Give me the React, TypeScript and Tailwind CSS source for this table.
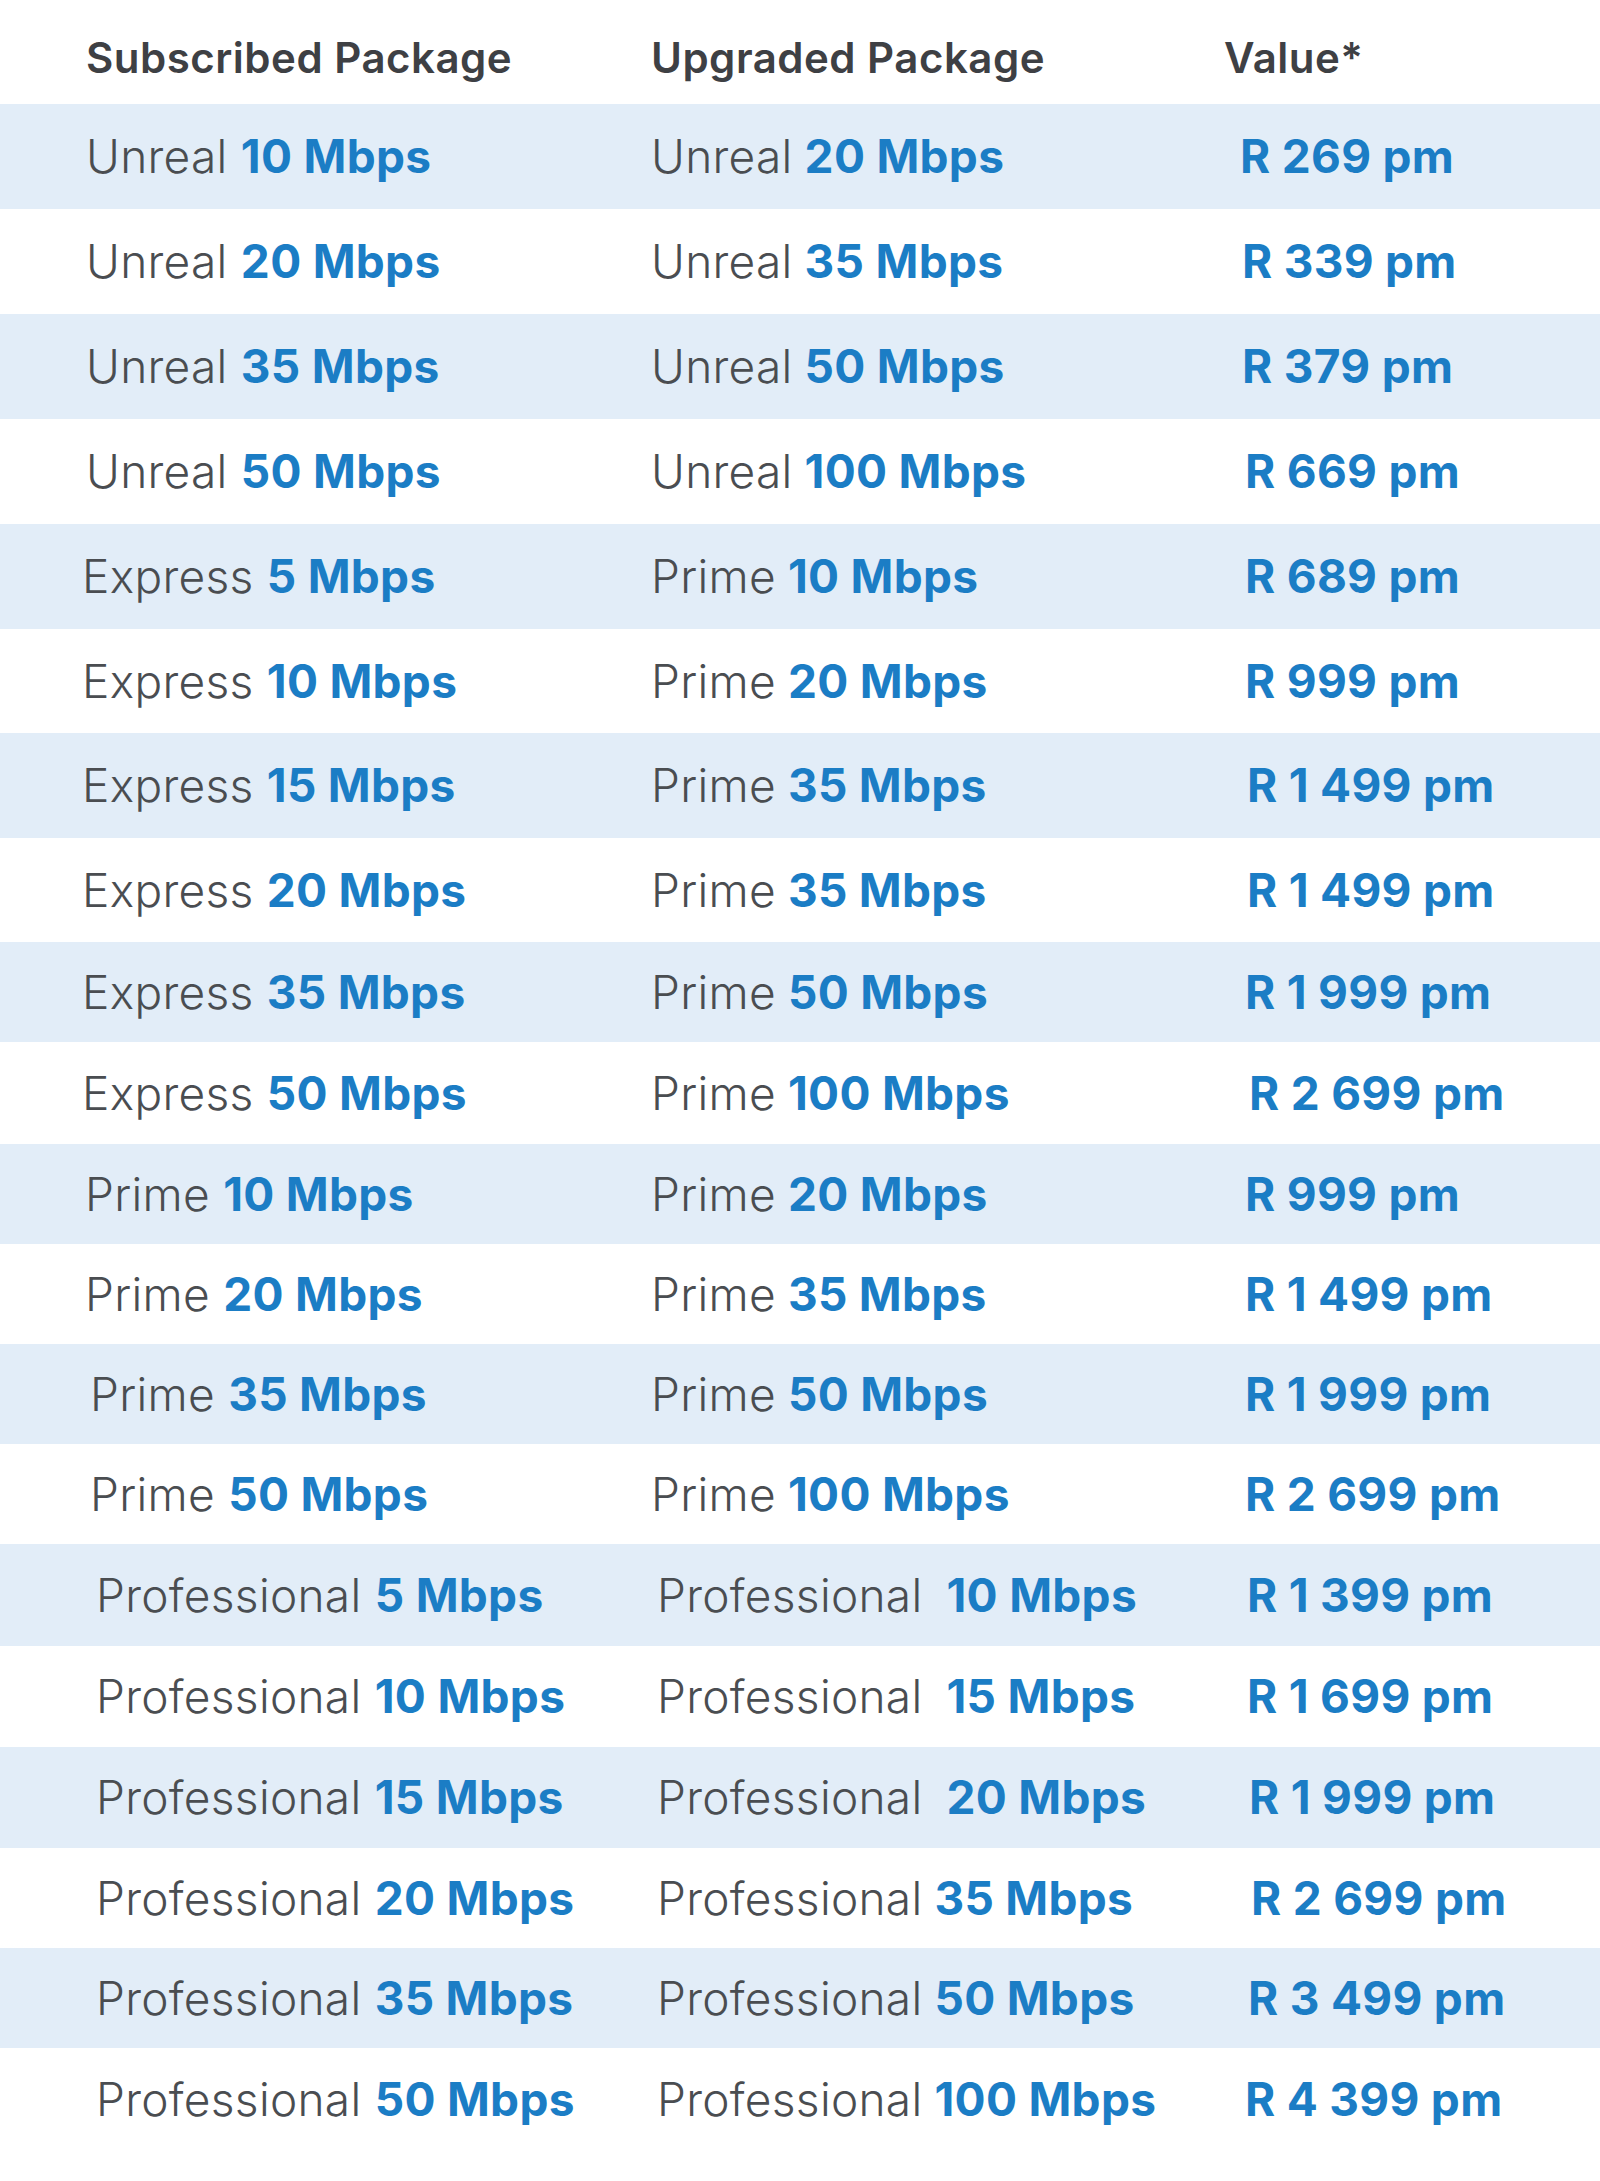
import React from 'react';

type Row = {
  from: string;
  fromSpeed: string;
  to: string;
  toSpeed: string;
  value: string;
  h: string;
  c1: string;
  c2: string;
  c3: string;
  gap2?: string;
};

const rows: Row[] = [
  { from: 'Unreal', fromSpeed: '10 Mbps', to: 'Unreal', toSpeed: '20 Mbps', value: 'R 269 pm', h: 'h-[105px]', c1: 'pl-[86px]', c2: 'pl-[0px]', c3: 'pl-[0px]' },
  { from: 'Unreal', fromSpeed: '20 Mbps', to: 'Unreal', toSpeed: '35 Mbps', value: 'R 339 pm', h: 'h-[105px]', c1: 'pl-[86px]', c2: 'pl-[0px]', c3: 'pl-[2px]' },
  { from: 'Unreal', fromSpeed: '35 Mbps', to: 'Unreal', toSpeed: '50 Mbps', value: 'R 379 pm', h: 'h-[105px]', c1: 'pl-[86px]', c2: 'pl-[0px]', c3: 'pl-[2px]' },
  { from: 'Unreal', fromSpeed: '50 Mbps', to: 'Unreal', toSpeed: '100 Mbps', value: 'R 669 pm', h: 'h-[105px]', c1: 'pl-[86px]', c2: 'pl-[0px]', c3: 'pl-[5px]' },
  { from: 'Express', fromSpeed: '5 Mbps', to: 'Prime', toSpeed: '10 Mbps', value: 'R 689 pm', h: 'h-[105px]', c1: 'pl-[82px]', c2: 'pl-[0px]', c3: 'pl-[5px]' },
  { from: 'Express', fromSpeed: '10 Mbps', to: 'Prime', toSpeed: '20 Mbps', value: 'R 999 pm', h: 'h-[104px]', c1: 'pl-[82px]', c2: 'pl-[0px]', c3: 'pl-[5px]' },
  { from: 'Express', fromSpeed: '15 Mbps', to: 'Prime', toSpeed: '35 Mbps', value: 'R 1 499 pm', h: 'h-[105px]', c1: 'pl-[82px]', c2: 'pl-[0px]', c3: 'pl-[7px]' },
  { from: 'Express', fromSpeed: '20 Mbps', to: 'Prime', toSpeed: '35 Mbps', value: 'R 1 499 pm', h: 'h-[104px]', c1: 'pl-[82px]', c2: 'pl-[0px]', c3: 'pl-[7px]' },
  { from: 'Express', fromSpeed: '35 Mbps', to: 'Prime', toSpeed: '50 Mbps', value: 'R 1 999 pm', h: 'h-[100px]', c1: 'pl-[82px]', c2: 'pl-[0px]', c3: 'pl-[5px]' },
  { from: 'Express', fromSpeed: '50 Mbps', to: 'Prime', toSpeed: '100 Mbps', value: 'R 2 699 pm', h: 'h-[102px]', c1: 'pl-[82px]', c2: 'pl-[0px]', c3: 'pl-[9px]' },
  { from: 'Prime', fromSpeed: '10 Mbps', to: 'Prime', toSpeed: '20 Mbps', value: 'R 999 pm', h: 'h-[100px]', c1: 'pl-[85px]', c2: 'pl-[0px]', c3: 'pl-[5px]' },
  { from: 'Prime', fromSpeed: '20 Mbps', to: 'Prime', toSpeed: '35 Mbps', value: 'R 1 499 pm', h: 'h-[100px]', c1: 'pl-[85px]', c2: 'pl-[0px]', c3: 'pl-[5px]' },
  { from: 'Prime', fromSpeed: '35 Mbps', to: 'Prime', toSpeed: '50 Mbps', value: 'R 1 999 pm', h: 'h-[100px]', c1: 'pl-[90px]', c2: 'pl-[0px]', c3: 'pl-[5px]' },
  { from: 'Prime', fromSpeed: '50 Mbps', to: 'Prime', toSpeed: '100 Mbps', value: 'R 2 699 pm', h: 'h-[100px]', c1: 'pl-[90px]', c2: 'pl-[0px]', c3: 'pl-[5px]' },
  { from: 'Professional', fromSpeed: '5 Mbps', to: 'Professional', toSpeed: '10 Mbps', value: 'R 1 399 pm', h: 'h-[102px]', c1: 'pl-[96px]', c2: 'pl-[6px]', c3: 'pl-[7px]', gap2: 'ml-[24px]' },
  { from: 'Professional', fromSpeed: '10 Mbps', to: 'Professional', toSpeed: '15 Mbps', value: 'R 1 699 pm', h: 'h-[101px]', c1: 'pl-[96px]', c2: 'pl-[6px]', c3: 'pl-[7px]', gap2: 'ml-[24px]' },
  { from: 'Professional', fromSpeed: '15 Mbps', to: 'Professional', toSpeed: '20 Mbps', value: 'R 1 999 pm', h: 'h-[101px]', c1: 'pl-[96px]', c2: 'pl-[6px]', c3: 'pl-[9px]', gap2: 'ml-[24px]' },
  { from: 'Professional', fromSpeed: '20 Mbps', to: 'Professional', toSpeed: '35 Mbps', value: 'R 2 699 pm', h: 'h-[100px]', c1: 'pl-[96px]', c2: 'pl-[6px]', c3: 'pl-[11px]' },
  { from: 'Professional', fromSpeed: '35 Mbps', to: 'Professional', toSpeed: '50 Mbps', value: 'R 3 499 pm', h: 'h-[100px]', c1: 'pl-[96px]', c2: 'pl-[6px]', c3: 'pl-[8px]' },
  { from: 'Professional', fromSpeed: '50 Mbps', to: 'Professional', toSpeed: '100 Mbps', value: 'R 4 399 pm', h: 'h-[102px]', c1: 'pl-[96px]', c2: 'pl-[6px]', c3: 'pl-[5px]' },
];

const font = "font-['Inter','Liberation_Sans',sans-serif]";

export default function App() {
  return (
    <div className={`w-[1600px] h-[2181px] bg-white ${font}`}>
      {/* header */}
      <div className="h-[104px] pt-[10px] flex items-center text-[42px] font-semibold text-[#3e4044] tracking-[0.5px]">
        <div className="w-[651px] pl-[86px]">Subscribed Package</div>
        <div className="w-[573px]">Upgraded Package</div>
        <div>Value*</div>
      </div>

      {rows.map((r, i) => (
        <div
          key={i}
          className={`${r.h} flex items-center text-[46px] tracking-[0.3px] ${i % 2 === 0 ? 'bg-[#e2edf8]' : 'bg-white'}`}
        >
          <div className={`w-[651px] ${r.c1} whitespace-nowrap`}>
            <span className="font-light text-[#4a4d51]">{r.from} </span>
            <span className="font-bold text-[#1b7dc5]">{r.fromSpeed}</span>
          </div>
          <div className={`w-[589px] ${r.c2} whitespace-nowrap`}>
            <span className="font-light text-[#4a4d51]">{r.to}</span>
            <span className={`font-bold text-[#1b7dc5] inline-block ${r.gap2 ?? 'ml-[12px]'}`}>{r.toSpeed}</span>
          </div>
          <div className={`${r.c3} whitespace-nowrap font-bold text-[#1b7dc5]`}>{r.value}</div>
        </div>
      ))}
    </div>
  );
}
